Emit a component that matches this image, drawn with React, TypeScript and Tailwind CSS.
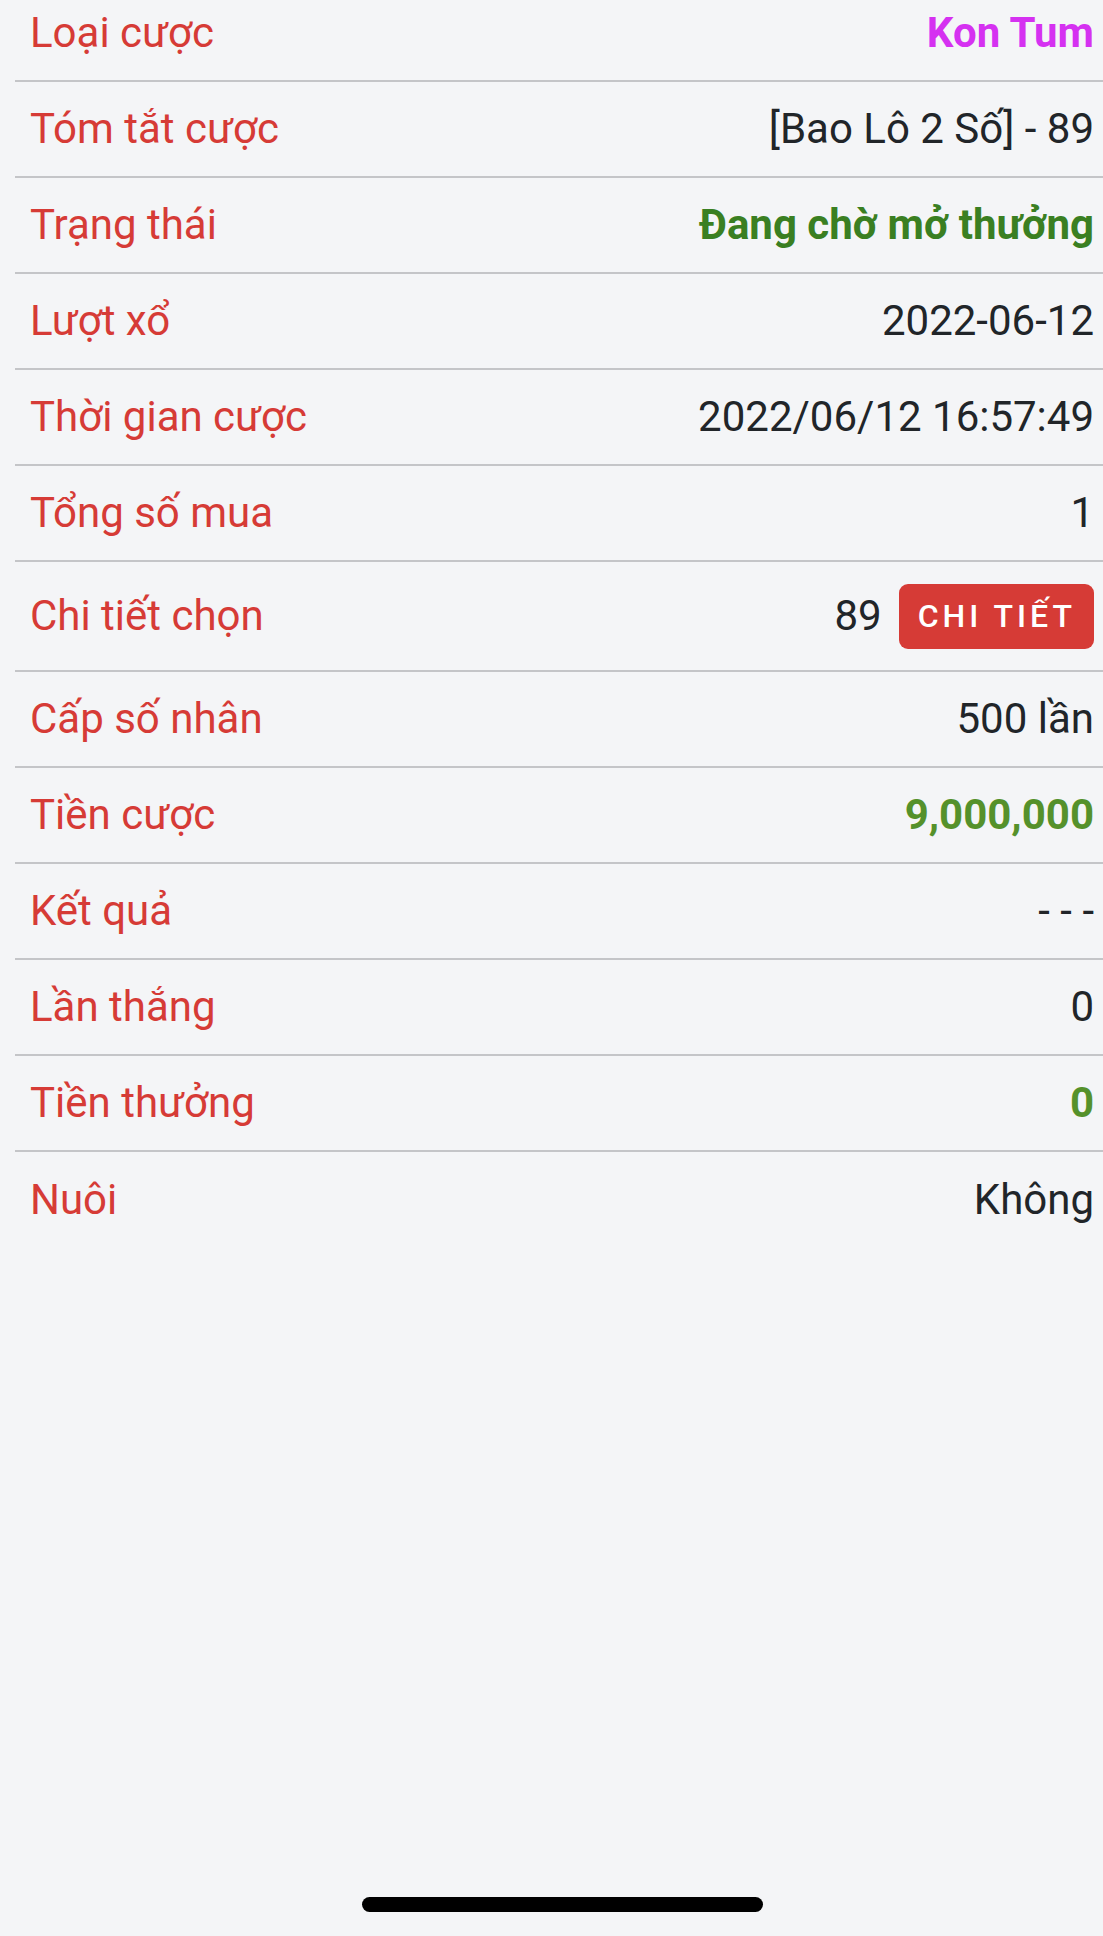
type Row = {
  label: string;
  value: string;
  tone?: 'plain' | 'purple' | 'green' | 'lime';
  detail?: boolean;
};

const rows: Row[] = [
  { label: 'Loại cược', value: 'Kon Tum', tone: 'purple' },
  { label: 'Tóm tắt cược', value: '[Bao Lô 2 Số] - 89' },
  { label: 'Trạng thái', value: 'Đang chờ mở thưởng', tone: 'green' },
  { label: 'Lượt xổ', value: '2022-06-12' },
  { label: 'Thời gian cược', value: '2022/06/12 16:57:49' },
  { label: 'Tổng số mua', value: '1' },
  { label: 'Chi tiết chọn', value: '89', detail: true },
  { label: 'Cấp số nhân', value: '500 lần' },
  { label: 'Tiền cược', value: '9,000,000', tone: 'lime' },
  { label: 'Kết quả', value: '- - -' },
  { label: 'Lần thắng', value: '0' },
  { label: 'Tiền thưởng', value: '0', tone: 'lime' },
  { label: 'Nuôi', value: 'Không' },
];

const toneClass = {
  plain: 'text-[#212529]',
  purple: 'text-[#d531f1] font-bold',
  green: 'text-[#3a7f22] font-bold',
  lime: 'text-[#55912b] font-bold',
};

const App = (): JSX.Element => {
  return (
    <div
      className="relative w-[1103px] h-[1936px] overflow-hidden bg-[#f4f5f7]"
      style={{ fontFamily: 'Roboto, "Noto Sans", sans-serif' }}
    >
      <div className="pl-[15px] -mt-[14px]">
        {rows.map((row, index) => (
          <div
            key={index}
            className={`flex items-center justify-between pl-[15px] pr-[9px] text-[42px] leading-none ${
              row.detail ? 'h-[110px]' : 'h-[96px]'
            } ${index < rows.length - 1 ? 'border-b-2 border-[#c4c5c8]' : ''}`}
          >
            <span className="text-[#d63b36]">{row.label}</span>
            <div className="flex items-center">
              <span className={toneClass[row.tone ?? 'plain']}>{row.value}</span>
              {row.detail && (
                <button className="ml-[17px] h-[65px] pl-[19px] pr-[18px] rounded-[9px] bg-[#d63b36] text-white text-[32px] font-medium tracking-[4px] leading-none">
                  CHI TIẾT
                </button>
              )}
            </div>
          </div>
        ))}
      </div>

      {/* home indicator */}
      <div className="absolute left-[362px] top-[1897px] w-[401px] h-[15px] rounded-full bg-black" />
    </div>
  );
};

export default App;
